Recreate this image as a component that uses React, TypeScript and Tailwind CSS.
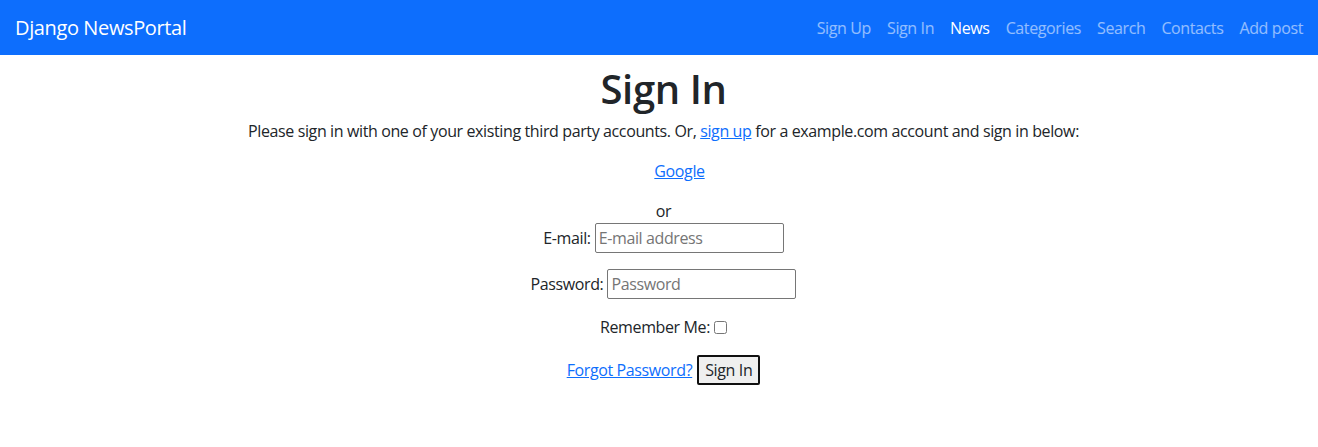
const navLinks = [
  { label: 'Sign Up', active: false },
  { label: 'Sign In', active: false },
  { label: 'News', active: true },
  { label: 'Categories', active: false },
  { label: 'Search', active: false },
  { label: 'Contacts', active: false },
  { label: 'Add post', active: false },
]

export default function App() {
  return (
    <div className="min-h-screen bg-white font-['Open_Sans',sans-serif] text-[16px] tracking-[-0.38px] text-[#212529]">
      <nav className="flex h-[55px] items-center justify-between bg-[#0d6efd] pl-[15px] pr-[7px]">
        <a href="#" className="text-[20px] leading-[30px] text-white">
          Django NewsPortal
        </a>
        <ul className="flex items-center">
          {navLinks.map((link) => (
            <li key={link.label}>
              <a
                href="#"
                className={
                  link.active
                    ? 'block px-2 py-2 font-medium text-white'
                    : 'block px-2 py-2 text-white/55'
                }
              >
                {link.label}
              </a>
            </li>
          ))}
        </ul>
      </nav>

      <main className="flex flex-col items-center pl-[9px] text-center leading-6">
        <h1 className="mt-[10px] mb-[6px] text-[40px] leading-[48px] font-semibold tracking-[-0.4px]">Sign In</h1>
        <p className="mb-4">
          Please sign in with one of your existing third party accounts. Or,{' '}
          <a href="#" className="text-[#0d6efd] underline">
            sign up
          </a>{' '}
          for a example.com account and sign in below:
        </p>
        <ul className="mb-4 list-none pl-8">
          <li>
            <a href="#" className="text-[#0d6efd] underline">
              Google
            </a>
          </li>
        </ul>
        <p>or</p>

        <form className="flex flex-col items-center">
          <p className="mb-4 flex items-center gap-[4px]">
            <label htmlFor="email">E-mail:</label>
            <input
              id="email"
              type="email"
              placeholder="E-mail address"
              className="h-[30px] w-[189px] rounded-[2px] border border-[#767676] px-[3px] text-[16px] placeholder:text-[#757575]"
            />
          </p>
          <p className="mb-4 flex items-center gap-[4px]">
            <label htmlFor="password">Password:</label>
            <input
              id="password"
              type="password"
              placeholder="Password"
              className="h-[30px] w-[189px] rounded-[2px] border border-[#767676] px-[3px] text-[16px] placeholder:text-[#757575]"
            />
          </p>
          <p className="mb-4 flex items-center gap-[4px]">
            <label htmlFor="remember">Remember Me:</label>
            <input id="remember" type="checkbox" className="h-[13px] w-[13px]" />
          </p>
          <div className="flex items-center gap-[5px]">
            <a href="#" className="text-[#0d6efd] underline">
              Forgot Password?
            </a>
            <button
              type="submit"
              className="h-[30px] rounded-[2px] border-2 border-[#101010] bg-[#efefef] px-[6px] text-[16px] leading-5"
            >
              Sign In
            </button>
          </div>
        </form>
      </main>
    </div>
  )
}
